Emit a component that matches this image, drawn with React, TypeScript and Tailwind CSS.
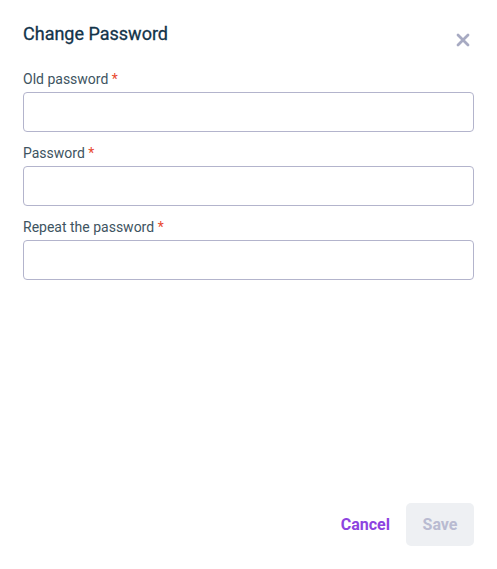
function Field({ label }: { label: string }) {
  return (
    <div className="flex flex-col">
      <label className="text-[14px] leading-[18px] text-[#3e5461] mb-[4px]">
        {label} <span className="text-[#e8492f]">*</span>
      </label>
      <input
        type="password"
        className="h-[40px] w-full rounded-[4px] border border-[#b3b4cc] px-3 outline-none"
      />
    </div>
  );
}

export default function App() {
  return (
    <div
      className="flex h-[569px] w-[497px] flex-col bg-white px-[23px] pt-[22px] pb-[23px]"
      style={{ fontFamily: 'Roboto, "Liberation Sans", sans-serif' }}
    >
      <div className="flex items-start justify-between">
        <h2 className="text-[18px] leading-[24px] font-normal text-[#13344a] [-webkit-text-stroke:0.3px_#13344a]">
          Change Password
        </h2>
        <button className="mt-[11px] mr-[4px] text-[#a7aac2]">
          <svg width="14" height="14" viewBox="0 0 14 14" fill="none">
            <path d="M2 2L12 12M12 2L2 12" stroke="currentColor" strokeWidth="2.8" strokeLinecap="round" />
          </svg>
        </button>
      </div>

      <div className="mt-[23px] flex flex-col gap-[12px]">
        <Field label="Old password" />
        <Field label="Password" />
        <Field label="Repeat the password" />
      </div>

      <div className="mt-auto flex items-center justify-end gap-[16px]">
        <button className="text-[16px] font-bold text-[#8d43e0]">Cancel</button>
        <button className="h-[43px] w-[68px] rounded-[5px] bg-[#eef0f3] text-[16px] font-bold text-[#b9bbd1]">
          Save
        </button>
      </div>
    </div>
  );
}
